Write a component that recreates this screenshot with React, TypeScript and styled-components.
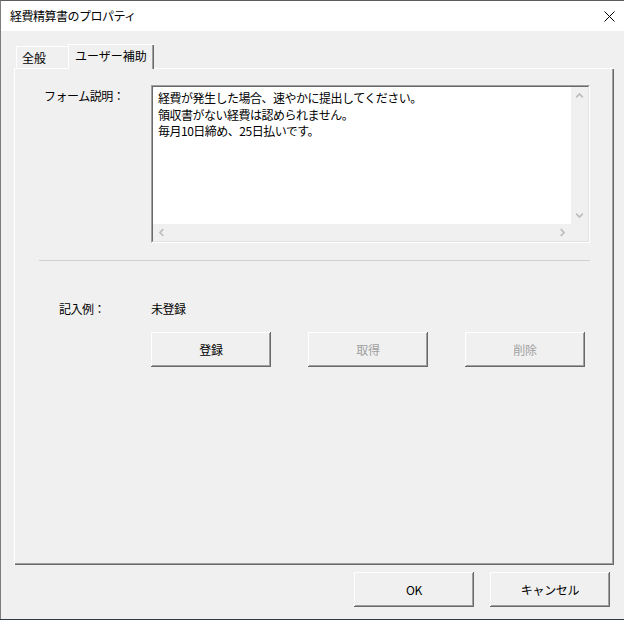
import React from "react";
import styled, { createGlobalStyle } from "styled-components";

const Global = createGlobalStyle`
  html, body { margin: 0; padding: 0; background: #2c3b4b; }
  body {
    font-family: "Noto Sans CJK JP", "Noto Sans", sans-serif;
    font-size: 12px;
    color: #000;
  }
  #root { width: 624px; height: 620px; }
`;

const Window = styled.div`
  width: 624px;
  height: 619px;
  box-sizing: border-box;
  border-top: 1px solid #5c5c5c;
  border-left: 1px solid #7d7d7d;
  background: #f0f0f0;
  display: flex;
  flex-direction: column;
`;

const TitleBar = styled.div`
  height: 30px;
  flex: none;
  background: #ffffff;
  display: flex;
  align-items: center;
  justify-content: space-between;
  padding: 0 9px 0 9px;
`;

const Title = styled.span`
  font-size: 12px;
  letter-spacing: -0.5px;
  line-height: 16px;
`;

const CloseIcon = styled.svg`
  width: 11px;
  height: 11px;
  display: block;
`;

const Client = styled.div`
  flex: 1;
  display: flex;
  flex-direction: column;
  padding: 13px 10px 0 13px;
`;

const TabStrip = styled.div`
  display: flex;
  align-items: flex-end;
  height: 24px;
  padding-left: 2px;
  position: relative;
  z-index: 1;
`;

const Tab = styled.div<{ $active?: boolean }>`
  box-sizing: border-box;
  width: ${(p) => (p.$active ? "86px" : "52px")};
  height: ${(p) => (p.$active ? "25px" : "22px")};
  margin-bottom: ${(p) => (p.$active ? "-1px" : "0")};
  padding-left: ${(p) => (p.$active ? "6px" : "5px")};
  line-height: ${(p) => (p.$active ? "22px" : "21px")};
  background: #f0f0f0;
  border-top: 1px solid #ffffff;
  border-left: 1px solid #ffffff;
  box-shadow: ${(p) =>
    p.$active ? "inset -1px 0 #696969, inset -2px 0 #a0a0a0" : "none"};
  font-size: 12px;
  white-space: nowrap;
`;

const Panel = styled.div`
  box-sizing: border-box;
  height: 497px;
  flex: none;
  border-top: 1px solid #ffffff;
  border-left: 1px solid #ffffff;
  box-shadow: inset -1px -1px #696969, inset -2px -2px #a0a0a0;
  padding: 16px 0 0 24px;
  display: flex;
  flex-direction: column;
`;

const FieldRow = styled.div`
  display: flex;
  align-items: flex-start;
`;

const Label = styled.div<{ $indent: number; $top?: number }>`
  width: 112px;
  flex: none;
  box-sizing: border-box;
  padding-left: ${(p) => p.$indent}px;
  padding-top: ${(p) => p.$top ?? 0}px;
  line-height: 16px;
  letter-spacing: -0.5px;
  white-space: nowrap;
`;

const Value = styled.div`
  line-height: 16px;
  letter-spacing: -0.5px;
`;

const TextBox = styled.div`
  box-sizing: border-box;
  width: 439px;
  height: 158px;
  border-style: solid;
  border-width: 1px;
  border-color: #a0a0a0 #ffffff #ffffff #a0a0a0;
  display: flex;
`;

const TextBoxInner = styled.div`
  flex: 1;
  border-style: solid;
  border-width: 1px;
  border-color: #696969 #e3e3e3 #e3e3e3 #696969;
  display: grid;
  grid-template-columns: 1fr 17px;
  grid-template-rows: 1fr 17px;
  background: #ffffff;
`;

const TextContent = styled.div`
  padding: 3px 0 0 5px;
  line-height: 16.5px;
  letter-spacing: -0.5px;
  white-space: nowrap;
  overflow: hidden;
`;

const ScrollBar = styled.div<{ $vertical?: boolean }>`
  background: #f0f0f0;
  display: flex;
  flex-direction: ${(p) => (p.$vertical ? "column" : "row")};
  justify-content: space-between;
`;

const ScrollCorner = styled.div`
  background: #f0f0f0;
`;

const ArrowBox = styled.div`
  width: 17px;
  height: 17px;
  display: flex;
  align-items: center;
  justify-content: center;
`;

const Separator = styled.div`
  width: 551px;
  margin-top: 17px;
  border-top: 1px solid #d0d0d0;
`;

const ExampleRow = styled(FieldRow)`
  margin-top: 40px;
`;

const ActionRow = styled.div`
  display: flex;
  gap: 37px;
  margin-top: 15px;
  padding-left: 112px;
`;

const Button = styled.button<{ $disabled?: boolean }>`
  width: 120px;
  height: 35px;
  box-sizing: border-box;
  margin: 0;
  padding: 0;
  border: none;
  background: #f0f0f0;
  box-shadow: inset -1px -1px #696969, inset 1px 1px #ffffff,
    inset -2px -2px #a0a0a0;
  font-family: "Noto Sans CJK JP", "Noto Sans", sans-serif;
  font-size: 12px;
  letter-spacing: -0.3px;
  color: ${(p) => (p.$disabled ? "#a0a0a0" : "#000000")};
  display: flex;
  align-items: center;
  justify-content: center;
  cursor: default;
`;

const Footer = styled.div`
  display: flex;
  justify-content: flex-end;
  gap: 16px;
  margin-top: 7px;
  padding-right: 4px;
`;

type Dir = "up" | "down" | "left" | "right";
const rot: Record<Dir, number> = { up: 0, right: 90, down: 180, left: 270 };

function Chevron({ dir }: { dir: Dir }) {
  return (
    <svg width="9" height="9" viewBox="0 0 9 9" style={{ transform: `rotate(${rot[dir]}deg)` }}>
      <polyline
        points="1.2,6.3 4.5,3 7.8,6.3"
        fill="none"
        stroke="#bdbdbd"
        strokeWidth="1.7"
      />
    </svg>
  );
}

export default function App() {
  return (
    <>
      <Global />
      <Window>
        <TitleBar>
          <Title>経費精算書のプロパティ</Title>
          <CloseIcon viewBox="0 0 11 11">
            <path d="M0.5 0.5 L10.5 10.5 M10.5 0.5 L0.5 10.5" stroke="#000" strokeWidth="1" fill="none" />
          </CloseIcon>
        </TitleBar>
        <Client>
          <TabStrip>
            <Tab>全般</Tab>
            <Tab $active>ユーザー補助</Tab>
          </TabStrip>
          <Panel>
            <FieldRow>
              <Label $indent={5} $top={3}>フォーム説明：</Label>
              <TextBox>
                <TextBoxInner>
                  <TextContent>
                    経費が発生した場合、速やかに提出してください。
                    <br />
                    領収書がない経費は認められません。
                    <br />
                    毎月10日締め、25日払いです。
                  </TextContent>
                  <ScrollBar $vertical>
                    <ArrowBox>
                      <Chevron dir="up" />
                    </ArrowBox>
                    <ArrowBox>
                      <Chevron dir="down" />
                    </ArrowBox>
                  </ScrollBar>
                  <ScrollBar>
                    <ArrowBox>
                      <Chevron dir="left" />
                    </ArrowBox>
                    <ArrowBox>
                      <Chevron dir="right" />
                    </ArrowBox>
                  </ScrollBar>
                  <ScrollCorner />
                </TextBoxInner>
              </TextBox>
            </FieldRow>
            <Separator />
            <ExampleRow>
              <Label $indent={20}>記入例：</Label>
              <Value>未登録</Value>
            </ExampleRow>
            <ActionRow>
              <Button>登録</Button>
              <Button $disabled>取得</Button>
              <Button $disabled>削除</Button>
            </ActionRow>
          </Panel>
          <Footer>
            <Button>OK</Button>
            <Button>キャンセル</Button>
          </Footer>
        </Client>
      </Window>
    </>
  );
}
